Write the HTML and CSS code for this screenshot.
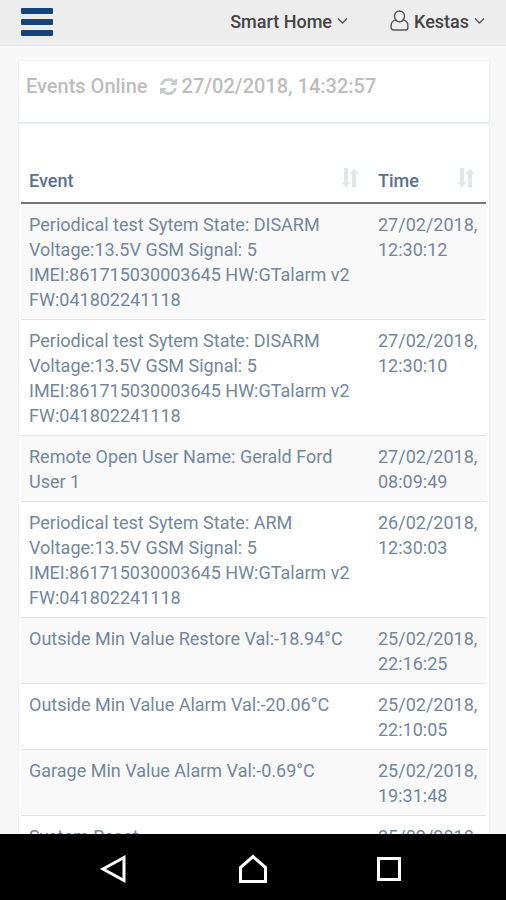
FILE: index.html
```
<!DOCTYPE html>
<html lang="en">
<head>
  <meta charset="UTF-8" />
  <meta name="viewport" content="width=device-width, initial-scale=1.0" />
  <title>Events Online</title>
  <link rel="stylesheet" href="styles.css">
</head>
<body>
  <header class="topbar">
    <button class="menu-btn" aria-label="Menu">
      <span class="bar"></span>
      <span class="bar"></span>
      <span class="bar"></span>
    </button>
    <nav class="top-links">
      <a href="#home">Smart Home
        <svg class="chevron" viewBox="0 0 10 6"><path d="M.5.5 5 5 9.5.5" /></svg>
      </a>
      <a href="#user">
        <svg class="user-icon" viewBox="0 0 20 24"><path d="M10 1.500a5.300 5.600 0 0 1 5.300 5.600c0 2-.9 3.700-2.400 4.700a4.900 4.900 0 0 1-5.800 0C5.600 10.800 4.700 9.100 4.700 7.100A5.300 5.600 0 0 1 10 1.500zM6 11.100c-3 .6-4.800 2.600-4.800 5.600v2.300a2.500 2.500 0 0 0 2.500 2.500h12.600a2.500 2.500 0 0 0 2.500-2.500v-2.300c0-3-1.800-5-4.800-5.600" /></svg>
        Kestas
        <svg class="chevron" viewBox="0 0 10 6"><path d="M.5.5 5 5 9.5.5" /></svg>
      </a>
    </nav>
  </header>

  <main class="content">
    <section class="panel">
      <h1 class="panel-title">
        Events Online
        <svg class="refresh-icon" viewBox="0 0 1536 1536"><path d="M1511 928q0 5-1 7-64 268-268 434.500T764 1536q-146 0-282.500-55T238 1324l-129 129q-19 19-45 19t-45-19-19-45V960q0-26 19-45t45-19h448q26 0 45 19t19 45-19 45l-137 137q71 66 161 102t187 36q134 0 250-65t186-179q11-17 53-117 8-23 30-23h192q13 0 22.500 9.500t9.500 22.500zm25-800v448q0 26-19 45t-45 19h-448q-26 0-45-19t-19-45 19-45l138-138Q969 256 768 256q-134 0-250 65T332 500q-11 17-53 117-8 23-30 23H50q-13 0-22.500-9.500T18 608v-7q65-268 270-434.500T768 0q146 0 284 55.500T1297 212l130-129q19-19 45-19t45 19 19 45z" /></svg>
        27/02/2018, 14:32:57
      </h1>
      <div class="panel-body">
        <table class="events">
          <thead>
            <tr>
              <th class="col-event">
                <div class="th-inner">Event
                  <svg class="sort-icon" viewBox="0 0 18 20"><path d="M3 0h4v14h2.500L5 19.500.500 14H3zM11 19.500h4V6h2.500L13 .5 8.500 6H11z" /></svg>
                </div>
              </th>
              <th class="col-time">
                <div class="th-inner">Time
                  <svg class="sort-icon" viewBox="0 0 18 20"><path d="M3 0h4v14h2.500L5 19.500.500 14H3zM11 19.500h4V6h2.500L13 .5 8.500 6H11z" /></svg>
                </div>
              </th>
            </tr>
          </thead>
          <tbody>
            <tr>
              <td>Periodical test Sytem State: DISARM Voltage:13.5V GSM Signal: 5 IMEI:861715030003645 HW:GTalarm v2 FW:041802241118</td>
              <td>27/02/2018, 12:30:12</td>
            </tr>
            <tr>
              <td>Periodical test Sytem State: DISARM Voltage:13.5V GSM Signal: 5 IMEI:861715030003645 HW:GTalarm v2 FW:041802241118</td>
              <td>27/02/2018, 12:30:10</td>
            </tr>
            <tr>
              <td>Remote Open User Name: Gerald Ford User 1</td>
              <td>27/02/2018, 08:09:49</td>
            </tr>
            <tr>
              <td>Periodical test Sytem State: ARM Voltage:13.5V GSM Signal: 5 IMEI:861715030003645 HW:GTalarm v2 FW:041802241118</td>
              <td>26/02/2018, 12:30:03</td>
            </tr>
            <tr>
              <td>Outside Min Value Restore Val:-18.94°C</td>
              <td>25/02/2018, 22:16:25</td>
            </tr>
            <tr>
              <td>Outside Min Value Alarm Val:-20.06°C</td>
              <td>25/02/2018, 22:10:05</td>
            </tr>
            <tr>
              <td>Garage Min Value Alarm Val:-0.69°C</td>
              <td>25/02/2018, 19:31:48</td>
            </tr>
            <tr>
              <td>System Reset</td>
              <td>25/02/2018,</td>
            </tr>
          </tbody>
        </table>
      </div>
    </section>
  </main>

  <footer class="android-nav">
    <button aria-label="Back">
      <svg viewBox="0 0 28 28"><path d="M21 2.500v23L0 14z" /></svg>
    </button>
    <button aria-label="Home">
      <svg viewBox="0 0 28 28"><path d="M1.500 26.500V12.500L14 1.500l12.500 11v14z" /></svg>
    </button>
    <button aria-label="Recent apps">
      <svg viewBox="0 0 28 28"><path d="M3.500 3.500h21v21h-21z" /></svg>
    </button>
  </footer>
</body>
</html>
```
FILE: styles.css
```
* {
  box-sizing: border-box;
}
body {
  margin: 0;
  height: 100vh;
  display: flex;
  flex-direction: column;
  overflow: hidden;
  font-family: Roboto, sans-serif;
  font-size: 18px;
  line-height: 25px;
  color: #73879c;
  background-color: #f7f7f7;
}
button {
  border: none;
  background: none;
  padding: 0;
  cursor: pointer;
}
.topbar {
  flex: none;
  display: flex;
  align-items: center;
  justify-content: space-between;
  height: 46px;
  padding: 0 21px 3px;
  background-color: #ededed;
  border-bottom: 1px solid #e6e9ec;
}
.menu-btn {
  display: flex;
  flex-direction: column;
  gap: 5px;
  width: 32px;
  padding-top: 2px;
}
.bar {
  height: 6px;
  border-radius: 1px;
  background-color: #164478;
}
.top-links {
  display: flex;
  gap: 42px;
}
.top-links a {
  display: flex;
  align-items: center;
  gap: 5px;
  color: #444;
  font-weight: 500;
  text-decoration: none;
}
.chevron {
  width: 11px;
  height: 6px;
  fill: none;
  stroke: #555;
  stroke-width: 1.3;
}
.user-icon {
  width: 19px;
  height: 24px;
  fill: none;
  stroke: #555;
  stroke-width: 1.5;
}
.content {
  flex: 1;
  min-height: 0;
  overflow: hidden;
  padding: 14px 16px 0 18px;
}
.panel {
  background-color: #fff;
  border: 1px solid #eef1f2;
}
.panel-title {
  display: flex;
  align-items: center;
  margin: 0;
  padding: 13px 7px 23px;
  font-size: 20px;
  font-weight: 500;
  color: #bdbdbd;
  border-bottom: 2px solid #e8ebed;
}
.refresh-icon {
  width: 17px;
  height: 17px;
  margin: 0 5px 0 12px;
  fill: #c5cbd0;
}
.panel-body {
  padding: 36px 3px 0 2px;
}
.events {
  width: 100%;
  border-collapse: collapse;
}
th, td {
  padding: 8px 8px 7px;
  text-align: left;
  vertical-align: top;
}
th {
  padding-bottom: 9px;
  font-weight: 500;
  color: #59728f;
  border-bottom: 2px solid #777;
}
td {
  border-top: 1px solid #e1e3e5;
}
.col-time {
  width: 116px;
}
.th-inner {
  display: flex;
  justify-content: space-between;
}
.sort-icon {
  width: 18px;
  height: 20px;
  margin-right: 3px;
  fill: #e2e6e7;
}
tbody tr:nth-child(odd) {
  background-color: #f9f9f9;
}
.android-nav {
  flex: none;
  display: flex;
  justify-content: center;
  align-items: center;
  gap: 108px;
  height: 66px;
  padding-top: 4px;
  background-color: #000;
}
.android-nav button {
  width: 28px;
  height: 28px;
}
.android-nav svg {
  display: block;
  width: 28px;
  height: 28px;
  overflow: visible;
  fill: none;
  stroke: #fff;
  stroke-width: 3;
}
```
